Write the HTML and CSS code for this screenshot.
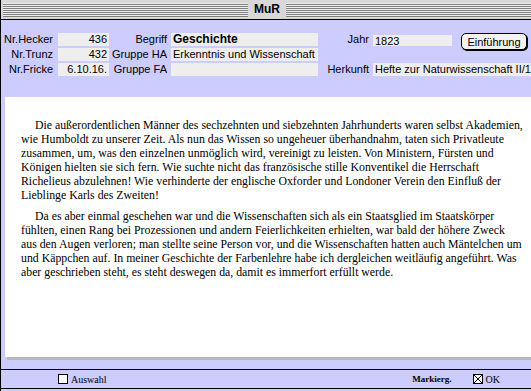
FILE: index.html
```html
<!DOCTYPE html>
<html lang="de">
<head>
    <meta charset="UTF-8">
    <title>MuR</title>
    <link rel="stylesheet" href="styles.css">
</head>
<body>
    <div class="window">
        <div class="titlebar">
            <div class="stripes"></div>
            <div class="title">MuR</div>
            <div class="stripes"></div>
        </div>

        <div class="header">
            <div class="label">Nr.Hecker</div>
            <div class="field num">436</div>
            <div class="label">Begriff</div>
            <div class="field strong">Geschichte</div>
            <div class="label">Jahr</div>
            <div class="field year">1823</div>
            <div class="btn-cell"><button class="btn">Einführung</button></div>

            <div class="label">Nr.Trunz</div>
            <div class="field num">432</div>
            <div class="label">Gruppe HA</div>
            <div class="field">Erkenntnis und Wissenschaft</div>
            <div class="spacer"></div>

            <div class="label">Nr.Fricke</div>
            <div class="field num">6.10.16.</div>
            <div class="label">Gruppe FA</div>
            <div class="field"></div>
            <div class="label">Herkunft</div>
            <div class="field wide">Hefte zur Naturwissenschaft II/1</div>
        </div>

        <div class="panel">
            <p>Die außerordentlichen Männer des sechzehnten und siebzehnten Jahrhunderts waren selbst Akademien,<br>
            wie Humboldt zu unserer Zeit. Als nun das Wissen so ungeheuer überhandnahm, taten sich Privatleute<br>
            zusammen, um, was den einzelnen unmöglich wird, vereinigt zu leisten. Von Ministern, Fürsten und<br>
            Königen hielten sie sich fern. Wie suchte nicht das französische stille Konventikel die Herrschaft<br>
            Richelieus abzulehnen! Wie verhinderte der englische Oxforder und Londoner Verein den Einfluß der<br>
            Lieblinge Karls des Zweiten!</p>
            <p>Da es aber einmal geschehen war und die Wissenschaften sich als ein Staatsglied im Staatskörper<br>
            fühlten, einen Rang bei Prozessionen und andern Feierlichkeiten erhielten, war bald der höhere Zweck<br>
            aus den Augen verloren; man stellte seine Person vor, und die Wissenschaften hatten auch Mäntelchen um<br>
            und Käppchen auf. In meiner Geschichte der Farbenlehre habe ich dergleichen weitläufig angeführt. Was<br>
            aber geschrieben steht, es steht deswegen da, damit es immerfort erfüllt werde.</p>
        </div>

        <div class="status">
            <label class="check"><span class="box"></span>Auswahl</label>
            <div class="status-right">
                <span class="mark">Markierg.</span>
                <label class="check"><span class="box checked"></span>OK</label>
            </div>
        </div>
    </div>
</body>
</html>
```

FILE: styles.css
```css
html, body {
    margin: 0;
    padding: 0;
    overflow: hidden;
}
body {
    font-family: "Liberation Sans", Arial, sans-serif;
    font-size: 11px;
    color: #000;
}
.window {
    width: 530px;
    height: 391px;
    background: #ccccff;
    border-left: 1px solid #000;
}
.titlebar {
    height: 19px;
    border-bottom: 1px solid #000;
    background: #d8d8d8;
    display: flex;
    align-items: center;
    padding-left: 2px;
}
.stripes {
    flex: 1;
    height: 14px;
    background: repeating-linear-gradient(to bottom, #eeeeee 0 1px, #808080 1px 2px);
}
.title {
    padding: 0 6px;
    font-weight: bold;
    font-size: 12px;
    line-height: 19px;
}
.header {
    height: 77px;
    box-sizing: border-box;
    padding-top: 13px;
    display: grid;
    grid-template-columns: 57px 51px 62px 147px 55px 79px 1fr;
    grid-template-rows: 13px 13px 13px;
    row-gap: 2px;
}
.label {
    text-align: right;
    padding-right: 4px;
    line-height: 13px;
    white-space: nowrap;
}
.header .label:first-child,
.header .label:nth-child(8),
.header .label:nth-child(13) {
    padding-right: 5px;
}
.field {
    background: #eeeeee;
    line-height: 13px;
    padding: 0 2px;
    white-space: nowrap;
    overflow: hidden;
}
.num {
    text-align: right;
}
.strong {
    font-weight: bold;
    font-size: 12px;
}
.year {
    margin-top: 2px;
}
.wide {
    grid-column: 6 / -1;
}
.spacer {
    grid-column: 5 / -1;
}
.btn {
    display: block;
    margin-left: 9px;
    width: 66px;
    height: 17px;
    padding: 0;
    font-family: "Liberation Sans", Arial, sans-serif;
    font-size: 11px;
    color: #000;
    background: #f2f2f2;
    border: 1px solid #000;
    border-radius: 5px;
    box-shadow: 1px 1px 0 #000;
}
.panel {
    margin-left: 4px;
    height: 260px;
    box-sizing: border-box;
    background: #fff;
    box-shadow: 2px 3px 0 #b8b8b8;
    padding: 21px 0 0 16px;
    font-family: "Liberation Serif", "Times New Roman", serif;
    font-size: 11.8px;
    line-height: 14px;
    overflow: hidden;
}
.panel p {
    margin: 0 0 7px;
    text-indent: 14px;
    white-space: nowrap;
}
.status {
    margin-top: 12px;
    height: 18px;
    border-top: 1px solid #000;
    border-bottom: 1px solid #000;
    display: flex;
    align-items: center;
    padding: 0 31px 0 57px;
    font-family: "Liberation Serif", "Times New Roman", serif;
    font-size: 10px;
}
.check {
    display: flex;
    align-items: center;
    gap: 3px;
}
.box {
    width: 8px;
    height: 8px;
    border: 1px solid #000;
    background: #fff;
}
.box.checked {
    background:
        linear-gradient(45deg, transparent 45%, #000 45% 55%, transparent 55%),
        linear-gradient(-45deg, transparent 45%, #000 45% 55%, transparent 55%),
        #fff;
}
.status-right {
    margin-left: auto;
    display: flex;
    align-items: center;
    gap: 21px;
}
.mark {
    font-weight: bold;
    font-size: 9px;
}
```
